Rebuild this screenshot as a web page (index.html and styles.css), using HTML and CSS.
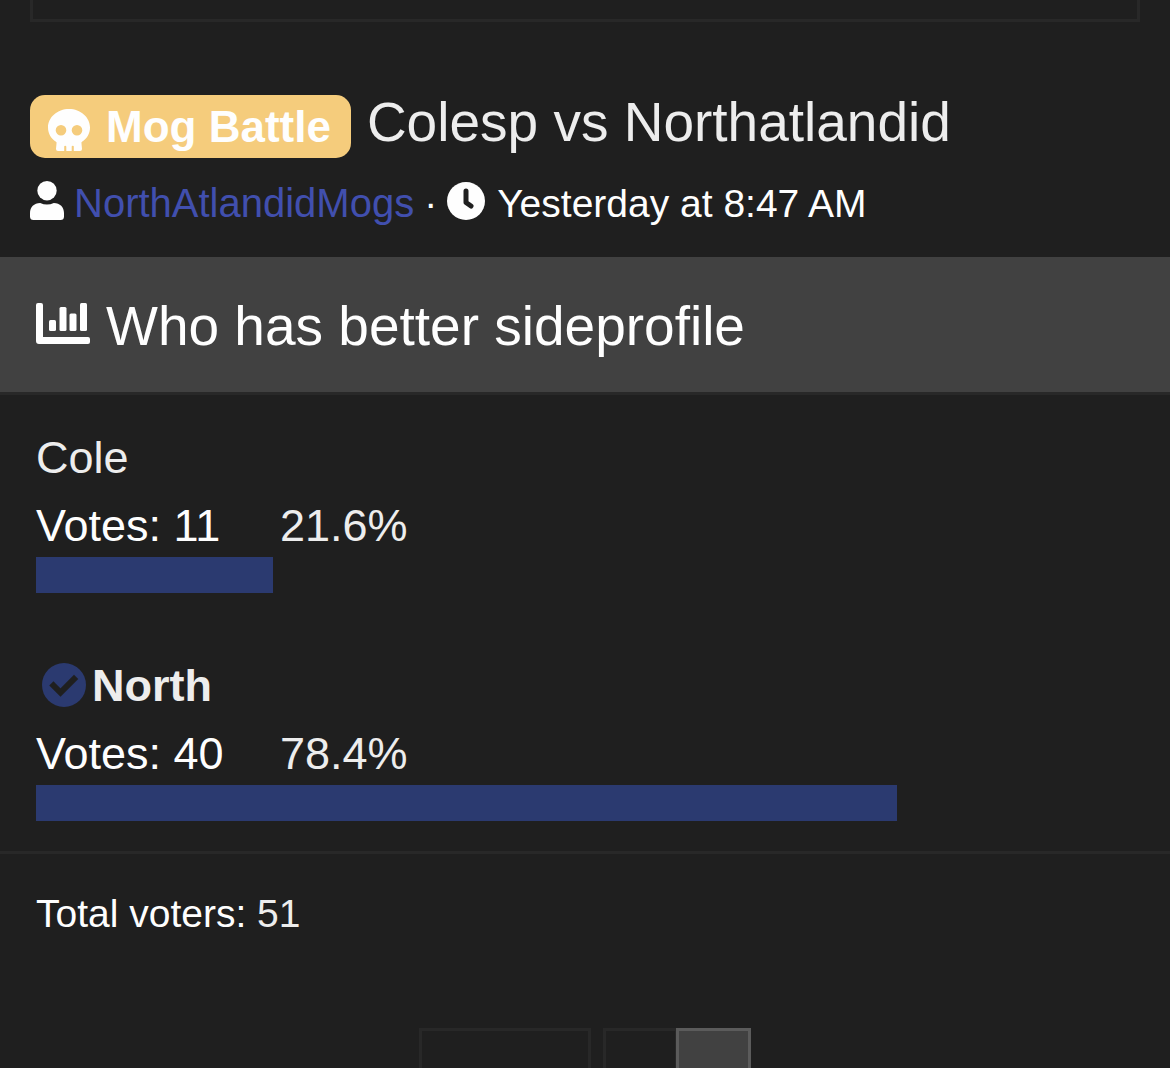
FILE: index.html
```
<!DOCTYPE html>
<html lang="en">
<head>
  <meta charset="UTF-8">
  <meta name="viewport" content="width=device-width, initial-scale=1.0">
  <title>Colesp vs Northatlandid</title>
  <link rel="stylesheet" href="styles.css">
</head>
<body>

  <!-- End of the notice block -->
  <div class="notice"></div>

  <!-- Thread title -->
  <header class="thread-header">
    <h1 class="thread-title">
      <a href="#" class="label">
        <svg class="icon-skull" viewBox="0 0 42 42" aria-hidden="true">
          <path fill="currentColor" fill-rule="evenodd" d="M21 0C9.400 0 0 8.200 0 18.500C0 24.500 3 29.500 8 32.800L8.600 33.500L8 40Q8 42 10 42H16.200V37.500Q16.200 36.800 17.200 36.800T18.300 37.500V42H23.700V37.500Q23.700 36.800 24.800 36.800T25.800 37.500V42H32Q34 42 34 40L33.400 33.500L34 32.800C39 29.500 42 24.500 42 18.500C42 8.200 32.600 0 21 0ZM13 16A5.300 5.300 0 1 1 13 26.600A5.300 5.300 0 1 1 13 16ZM29 16A5.300 5.300 0 1 1 29 26.600A5.300 5.300 0 1 1 29 16Z"/>
        </svg>
        Mog Battle
      </a>
      <span>Colesp vs Northatlandid</span>
    </h1>
    <div class="thread-meta">
      <svg class="icon-user" viewBox="0 0 34 39" aria-hidden="true">
        <circle cx="17" cy="9.700" r="9.700" fill="currentColor"/>
        <path fill="currentColor" d="M10.200 22Q17 25 23.800 22C30 22 34 26.300 34 32V35.500Q34 39 30.500 39H3.500Q0 39 0 35.500V32C0 26.300 4 22 10.200 22Z"/>
      </svg>
      <a href="#" class="author">NorthAtlandidMogs</a>
      <span class="dot">·</span>
      <svg class="icon-clock" viewBox="0 0 38 38" aria-hidden="true">
        <circle cx="19" cy="19" r="19" fill="currentColor"/>
        <path class="cutout" stroke-width="5" d="M19 9V20.500L24 24"/>
      </svg>
      <time>Yesterday at 8:47 AM</time>
    </div>
  </header>

  <!-- Poll -->
  <section class="poll">
    <h2 class="poll-header">
      <svg class="icon-chart" viewBox="0 0 54 41" aria-hidden="true">
        <path fill="currentColor" d="M2 0H5Q7 0 7 2V34H52Q54 34 54 36V39Q54 41 52 41H3Q0 41 0 38V2Q0 0 2 0Z"/>
        <rect x="13" y="17" width="7" height="11" rx="1.500" fill="currentColor"/>
        <rect x="23.500" y="4" width="7" height="24" rx="1.500" fill="currentColor"/>
        <rect x="33.500" y="10.500" width="7" height="17.500" rx="1.500" fill="currentColor"/>
        <rect x="44" y="0" width="7" height="28" rx="1.500" fill="currentColor"/>
      </svg>
      Who has better sideprofile
    </h2>

    <div class="poll-results">
      <div class="poll-result">
        <h3 class="answer">Cole</h3>
        <div class="numbers">
          <span class="votes">Votes: 11</span>
          <span class="percent">21.6%</span>
        </div>
        <div class="bar" style="width: 21.6%"></div>
      </div>

      <div class="poll-result">
        <h3 class="answer voted">
          <svg class="icon-check" viewBox="0 0 44 44" aria-hidden="true">
            <circle cx="22" cy="22" r="22" fill="currentColor"/>
            <path class="cutout check" stroke-width="6" d="M11.500 22.500L18.500 29.500L32 16"/>
          </svg>
          North
        </h3>
        <div class="numbers">
          <span class="votes">Votes: 40</span>
          <span class="percent">78.4%</span>
        </div>
        <div class="bar" style="width: 78.4%"></div>
      </div>
    </div>

    <div class="poll-footer">Total voters: <span class="total">51</span></div>
  </section>

  <!-- Page navigation -->
  <nav class="pager">
    <button class="page-prev" aria-label="Previous"></button>
    <div class="pages">
      <button class="page" aria-label="Page 1"></button>
      <button class="page current" aria-label="Page 2" aria-current="page"></button>
    </div>
  </nav>

</body>
</html>
```
FILE: styles.css
```
* {
  box-sizing: border-box;
}

body {
  margin: 0;
  height: 100vh;
  overflow: hidden;
  font-family: 'Helvetica Neue', 'Liberation Sans', Arial, sans-serif;
  font-size: 45px;
  background-color: #1f1f1f;
  color: #fefefe;
}

h1, h2, h3 {
  margin: 0;
  font-weight: normal;
}

a {
  text-decoration: none;
}

svg {
  flex: none;
}

.cutout {
  fill: none;
  stroke: #1f1f1f;
  stroke-linecap: round;
  stroke-linejoin: round;
}

.check {
  stroke-linecap: square;
  stroke-linejoin: miter;
}

.notice {
  height: 22px;
  margin: 0 30px;
  border: 3px solid #282828;
  border-top: none;
}

.thread-header {
  padding: 73px 30px 28px;
}

.thread-title {
  display: flex;
  align-items: flex-start;
  gap: 16px;
  font-size: 55px;
  line-height: 54px;
  color: #ededed;
}

.label {
  display: flex;
  align-items: center;
  gap: 16px;
  height: 63px;
  padding: 0 20px 0 18px;
  border-radius: 15px;
  background-color: #f5cc7c;
  color: #fefefe;
  font-size: 44px;
  font-weight: bold;
}

.icon-skull {
  width: 42px;
  height: 42px;
  margin-top: 6px;
}

.thread-meta {
  display: flex;
  align-items: center;
  margin-top: 20px;
  font-size: 39px;
  line-height: 51px;
}

.icon-user {
  width: 34px;
  height: 39px;
  margin: 0 10px 6px 0;
}

.author {
  font-size: 40px;
  color: #414fae;
}

.dot {
  margin: 0 10px;
}

.icon-clock {
  width: 38px;
  height: 38px;
  margin: 0 12px 6px 0;
}

.poll-header {
  display: flex;
  align-items: center;
  gap: 16px;
  padding: 38px 36px 34px;
  border-bottom: 3px solid #282828;
  background-color: #414141;
  font-size: 55px;
  line-height: 63px;
}

.icon-chart {
  width: 54px;
  height: 41px;
  margin-bottom: 6px;
}

.poll-results {
  padding: 30px 36px;
}

.poll-result + .poll-result {
  margin-top: 60px;
}

.answer {
  display: flex;
  align-items: center;
  font-size: 45px;
  line-height: 66px;
  color: #ededed;
}

.voted {
  gap: 6px;
  padding-left: 6px;
  font-weight: bold;
}

.icon-check {
  width: 44px;
  height: 44px;
  margin-bottom: 3px;
  color: #2b3a70;
}

.numbers {
  display: flex;
  padding-top: 4px;
  line-height: 62px;
}

.votes {
  min-width: 244px;
}

.percent {
  color: #ededed;
}

.bar {
  height: 36px;
  background-color: #2b3a70;
}

.poll-footer {
  padding: 30px 36px;
  border-top: 3px solid #282828;
  font-size: 39px;
  line-height: 60px;
}

.total {
  color: #ededed;
}

.pager {
  display: flex;
  justify-content: center;
  gap: 12px;
  margin-top: 54px;
}

.pages {
  display: flex;
}

.page-prev,
.page {
  height: 90px;
  border: 3px solid #282828;
  background-color: #1f1f1f;
}

.page-prev {
  width: 172px;
}

.page {
  width: 75px;
}

.page + .page {
  margin-left: -2px;
}

.page.current {
  border-color: #5b5b5b;
  background-color: #414141;
}
```
